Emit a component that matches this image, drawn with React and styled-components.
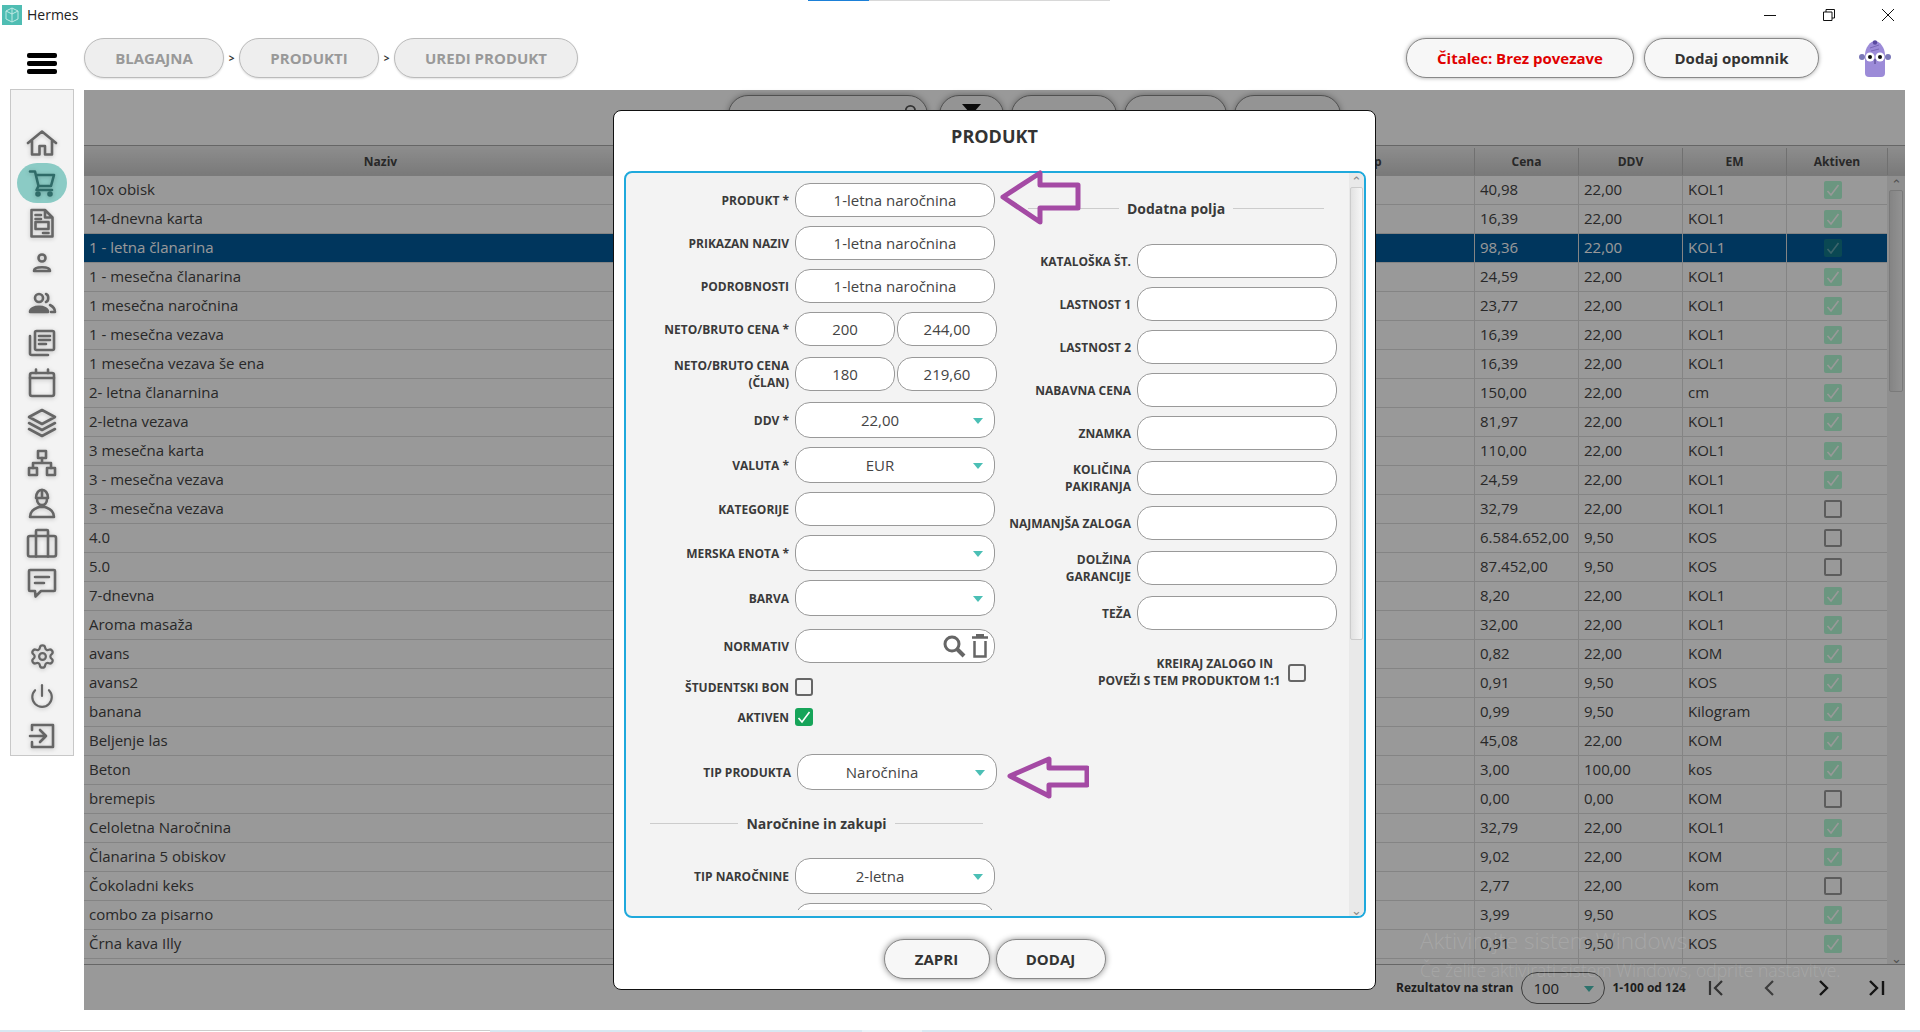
import React from "react";
import styled, { createGlobalStyle } from "styled-components";
import { Settings, Power, Search } from "lucide-react";

const rows = [
  ["10x obisk", "40,98", "22,00", "KOL1", true],
  ["14-dnevna karta", "16,39", "22,00", "KOL1", true],
  ["1 - letna članarina", "98,36", "22,00", "KOL1", true],
  ["1 - mesečna članarina", "24,59", "22,00", "KOL1", true],
  ["1 mesečna naročnina", "23,77", "22,00", "KOL1", true],
  ["1 - mesečna vezava", "16,39", "22,00", "KOL1", true],
  ["1 mesečna vezava še ena", "16,39", "22,00", "KOL1", true],
  ["2- letna članarnina", "150,00", "22,00", "cm", true],
  ["2-letna vezava", "81,97", "22,00", "KOL1", true],
  ["3 mesečna karta", "110,00", "22,00", "KOL1", true],
  ["3 - mesečna vezava", "24,59", "22,00", "KOL1", true],
  ["3 - mesečna vezava", "32,79", "22,00", "KOL1", false],
  ["4.0", "6.584.652,00", "9,50", "KOS", false],
  ["5.0", "87.452,00", "9,50", "KOS", false],
  ["7-dnevna", "8,20", "22,00", "KOL1", true],
  ["Aroma masaža", "32,00", "22,00", "KOL1", true],
  ["avans", "0,82", "22,00", "KOM", true],
  ["avans2", "0,91", "9,50", "KOS", true],
  ["banana", "0,99", "9,50", "Kilogram", true],
  ["Beljenje las", "45,08", "22,00", "KOM", true],
  ["Beton", "3,00", "100,00", "kos", true],
  ["bremepis", "0,00", "0,00", "KOM", false],
  ["Celoletna Naročnina", "32,79", "22,00", "KOL1", true],
  ["Članarina 5 obiskov", "9,02", "22,00", "KOM", true],
  ["Čokoladni keks", "2,77", "22,00", "kom", false],
  ["combo za pisarno", "3,99", "9,50", "KOS", true],
  ["Črna kava Illy", "0,91", "9,50", "KOS", true],
  ["", "", "", "", true],
];

const rightFields = [
  { label: "KATALOŠKA ŠT.", mb: 9 },
  { label: "LASTNOST 1", mb: 9 },
  { label: "LASTNOST 2", mb: 9 },
  { label: "NABAVNA CENA", mb: 9 },
  { label: "ZNAMKA", mb: 11 },
  { label: ["KOLIČINA", "PAKIRANJA"], mb: 11 },
  { label: "NAJMANJŠA ZALOGA", mb: 11 },
  { label: ["DOLŽINA", "GARANCIJE"], mb: 11 },
  { label: "TEŽA", mb: 0 },
];

const Ico = ({ children, stroke = "#666", w = 2.6 }) => (
  <svg width="32" height="32" viewBox="0 0 32 32" fill="none" stroke={stroke} strokeWidth={w} strokeLinejoin="round" strokeLinecap="round">
    {children}
  </svg>
);

const menuIcons = [
  <Ico key="home"><path d="M2 16 16 4.500 30 16M6 13v14.500h7.500v-8.500h5.500v8.500H26V13" /></Ico>,
  <Ico key="cart" stroke="#2f6b68"><path d="M4 4.500h5L12.500 19H25l3-11H10M12.500 19 10.500 23H26" /><circle cx="12" cy="27" r="1.500" /><circle cx="24" cy="27" r="1.500" /></Ico>,
  <Ico key="doc"><path d="M5.500 3h13.500l7.500 7.500V29.500H5.500zM19 3v7.500h7.500M9.500 8H15M9.500 12H15M17 26h5.500" /><rect x="9.500" y="15" width="13" height="7" /></Ico>,
  <Ico key="person"><circle cx="16" cy="11" r="3.500" /><path d="M8 24c0-5 16-5 16 0z" /></Ico>,
  <Ico key="users"><circle cx="13" cy="11" r="4" /><path d="M4 25c0-7 18-7 18 0z" fill="#666" /><path d="M20 7c3 1 3 7 0 8M24 18c3 1.500 5 4 5 7h-4" /></Ico>,
  <Ico key="copies"><rect x="9" y="4" width="19" height="19" rx="1.500" /><path d="M4 9v17.500Q4 28 6 28h16M13 9h11M13 13h11M13 17h7" /></Ico>,
  <Ico key="calendar"><rect x="4" y="6" width="24" height="23" rx="2" /><path d="M4 11h24M10 2.500V6M22 2.500V6" /></Ico>,
  <Ico key="layers"><path d="M16 3 29 10 16 17 3 10zM3 16l13 7 13-7M3 22l13 7 13-7" /></Ico>,
  <Ico key="network"><rect x="12" y="4" width="8" height="7" /><rect x="3" y="21" width="8" height="7" /><rect x="21" y="21" width="8" height="7" /><path d="M16 11v5M7 21v-5h18v5" /></Ico>,
  <Ico key="worker"><path d="M10 11c0-11 12-11 12 0zM16 3v8M11 12c0 8 10 8 10 0M4 30c0-8 7-9 9-10h6c2 1 9 2 9 10z" /></Ico>,
  <Ico key="case"><rect x="2" y="9" width="28" height="20.500" rx="2" /><path d="M10 9V4q0-1 1-1h10q1 0 1 1v5M10 9v20.500M22 9v20.500" /></Ico>,
  <Ico key="chat"><path d="M4 3h24q1 0 1 1v19q0 1-1 1H15l-5.500 5.500L9 24H4q-1 0-1-1V4q0-1 1-1zM9 10h14M9 16h9" /></Ico>,
];

const bottomIcons = [
  <Settings key="gear" size={27} color="#666" strokeWidth={2} />,
  <Power key="power" size={26} color="#666" strokeWidth={2} />,
  <Ico key="exit"><path d="M6 10V5h21v22H6v-5M4 16h16M14 10l6 6-6 6" /></Ico>,
];

const Arrow = ({ points, left, top, width, height }) => (
  <ArrowSvg $left={left} $top={top} width={width} height={height} viewBox={`0 0 ${width} ${height}`}>
    <polygon points={points} fill="none" stroke="#a44aa4" strokeWidth="5" strokeLinejoin="round" />
  </ArrowSvg>
);

const Mascot = () => (
  <svg width="32" height="38" viewBox="0 0 32 38">
    <path d="M6 15c0-7 5-14 10-14s10 7 10 14v18q0 4-4 4H10q-4 0-4-4z" fill="#9c8bd8" />
    <path d="M11 8l9-3M12 11l8-2" stroke="#7a68b8" strokeWidth="1" fill="none" />
    <circle cx="16" cy="2.500" r="2.200" fill="#5a4aa0" />
    <circle cx="3" cy="17" r="3" fill="#7b78b8" />
    <circle cx="29" cy="17" r="3" fill="#7b78b8" />
    <circle cx="11" cy="17" r="4.500" fill="#fff" />
    <circle cx="21" cy="17" r="4.500" fill="#fff" />
    <circle cx="11" cy="17" r="2" fill="#111" />
    <circle cx="21" cy="17" r="2" fill="#111" />
    <path d="M16 19v5" stroke="#4a3d80" strokeWidth="1" />
  </svg>
);

const Check = ({ dim }) => (
  <svg width="14" height="14" viewBox="0 0 14 14" fill="none" stroke="#fff" strokeWidth="1.600" opacity={dim ? 0.35 : 1}>
    <path d="M1.500 8 5 12 12.500 2" />
  </svg>
);

export default function App() {
  return (
    <>
      <GlobalStyle />
      <Page>
        <TopLine>
          <TopBlue />
          <TopGrey />
        </TopLine>

        <TitleBar>
          <AppLogo>
            <svg width="14" height="16" viewBox="0 0 14 16" fill="none" stroke="#bfe9e4" strokeWidth="1">
              <path d="M7 1 13 4v8l-6 3-6-3V4zM7 1v14M1 4l6 3 6-3" />
            </svg>
          </AppLogo>
          <AppName>Hermes</AppName>
          <WindowControls>
            <svg width="12" height="12" viewBox="0 0 12 12" stroke="#111" fill="none"><path d="M0 6.500h12" /></svg>
            <svg width="12" height="12" viewBox="0 0 12 12" stroke="#111" fill="none"><path d="M.5 3h8.500v8.500H.5zM3 3V.5h8.500V9H9" /></svg>
            <svg width="12" height="12" viewBox="0 0 12 12" stroke="#111" fill="none"><path d="M0 0l12 12M12 0 0 12" /></svg>
          </WindowControls>
        </TitleBar>

        <Toolbar>
          <Burger>
            <span />
            <span />
            <span />
          </Burger>
          <Crumbs>
            <Crumb $w={140}>BLAGAJNA</Crumb>
            <CrumbSep>&gt;</CrumbSep>
            <Crumb $w={140}>PRODUKTI</Crumb>
            <CrumbSep>&gt;</CrumbSep>
            <Crumb $w={184}>UREDI PRODUKT</Crumb>
          </Crumbs>
          <ToolbarRight>
            <TopButton $w={228} $color="#e00000">Čitalec: Brez povezave</TopButton>
            <TopButton $w={175} $color="#333">Dodaj opomnik</TopButton>
            <MascotBox>
              <Mascot />
            </MascotBox>
          </ToolbarRight>
        </Toolbar>

        <Body>
          <Sidebar>
            {menuIcons.map((icon, i) => (
              <MenuItem key={i} $active={i === 1}>{icon}</MenuItem>
            ))}
            <MenuGap />
            {bottomIcons.map((icon, i) => (
              <MenuItem key={i}>{icon}</MenuItem>
            ))}
          </Sidebar>

          <Main>
            <FilterBar>
              <FilterPill $w={200}>
                <Search size={14} color="#555" strokeWidth={3} />
              </FilterPill>
              <FilterPill $w={65} $ml={4} $center>
                <svg width="19" height="14" viewBox="0 0 19 14" fill="#111"><path d="M0 0h19l-7 8v6H7V8z" /></svg>
              </FilterPill>
              <FilterPill $w={106} />
              <FilterPill $w={103} />
              <FilterPill $w={107} />
            </FilterBar>

            <TableHead>
              <HeadCell>Naziv</HeadCell>
              <HeadCell />
              <HeadCell>Tip</HeadCell>
              <HeadCell>Cena</HeadCell>
              <HeadCell>DDV</HeadCell>
              <HeadCell>EM</HeadCell>
              <HeadCell>Aktiven</HeadCell>
              <HeadCell />
            </TableHead>

            <TableBody>
              <RowList>
                {rows.map((r, i) => (
                  <Row key={i} $selected={i === 2}>
                    <Cell>{r[0]}</Cell>
                    <Cell />
                    <Cell />
                    <Cell $line>{r[1]}</Cell>
                    <Cell $line>{r[2]}</Cell>
                    <Cell $line>{r[3]}</Cell>
                    <Cell $line>
                      <TableCheck $on={r[4]} $selected={i === 2}>{r[4] && <Check dim={i === 2} />}</TableCheck>
                    </Cell>
                  </Row>
                ))}
              </RowList>
              <TableScroll>
                <ScrollArrow>⌃</ScrollArrow>
                <TableThumb />
                <ScrollArrow $down>⌄</ScrollArrow>
              </TableScroll>
            </TableBody>

            <Pager>
              <PagerLabel>Rezultatov na stran</PagerLabel>
              <PageSize>
                100
                <Caret />
              </PageSize>
              <PagerLabel>1-100 od 124</PagerLabel>
              <PagerNav>
                <svg width="20" height="20" viewBox="0 0 20 20" fill="none" stroke="#555" strokeWidth="2.200"><path d="M3 3v14M15 3 8 10l7 7" /></svg>
                <svg width="20" height="20" viewBox="0 0 20 20" fill="none" stroke="#666" strokeWidth="2.200"><path d="M13 3 6 10l7 7" /></svg>
                <svg width="20" height="20" viewBox="0 0 20 20" fill="none" stroke="#222" strokeWidth="2.400"><path d="m7 3 7 7-7 7" /></svg>
                <svg width="20" height="20" viewBox="0 0 20 20" fill="none" stroke="#222" strokeWidth="2.400"><path d="m4 3 7 7-7 7M17 3v14" /></svg>
              </PagerNav>
            </Pager>

            <Dim />
          </Main>
        </Body>

        <Taskbar>
          <TaskSeg $w={60} />
          <TaskSeg $w={430} $open />
          <TaskSeg $w={372} />
          <TaskSeg $w={60} $light />
          <TaskSeg $grow />
        </Taskbar>

        <Modal>
          <ModalTitle>PRODUKT</ModalTitle>
          <Panel>
            <PanelScroll>
              <LeftColumn>
                <Field $mb={9}><Label>PRODUKT *</Label><Input>1-letna naročnina</Input></Field>
                <Field $mb={9}><Label>PRIKAZAN NAZIV</Label><Input>1-letna naročnina</Input></Field>
                <Field $mb={9}><Label>PODROBNOSTI</Label><Input>1-letna naročnina</Input></Field>
                <Field $mb={11}>
                  <Label>NETO/BRUTO CENA *</Label>
                  <Input $w={100}>200</Input>
                  <Input $w={100} $ml={2}>244,00</Input>
                </Field>
                <Field $mb={11}>
                  <Label>NETO/BRUTO CENA<br />(ČLAN)</Label>
                  <Input $w={100}>180</Input>
                  <Input $w={100} $ml={2}>219,60</Input>
                </Field>
                <Field $mb={9} $h={36}><Label>DDV *</Label><Select>22,00<Caret $abs /></Select></Field>
                <Field $mb={9} $h={36}><Label>VALUTA *</Label><Select>EUR<Caret $abs /></Select></Field>
                <Field $mb={9}><Label>KATEGORIJE</Label><Input /></Field>
                <Field $mb={9} $h={36}><Label>MERSKA ENOTA *</Label><Select><Caret $abs /></Select></Field>
                <Field $mb={13} $h={36}><Label>BARVA</Label><Select><Caret $abs /></Select></Field>
                <Field $mb={15}>
                  <Label>NORMATIV</Label>
                  <Input>
                    <InputIcons>
                      <svg width="24" height="24" viewBox="0 0 24 24" fill="none" stroke="#666" strokeWidth="3">
                        <circle cx="10" cy="10" r="7" />
                        <path d="m15 15 7 7" strokeWidth="4" />
                      </svg>
                      <svg width="18" height="24" viewBox="0 0 18 24" fill="none" stroke="#666" strokeWidth="2.500">
                        <path d="M1 3.500h16M5 1h8M3.500 7v15.500h11V7" />
                      </svg>
                    </InputIcons>
                  </Input>
                </Field>
                <Field $mb={12} $h={18}><Label>ŠTUDENTSKI BON</Label><CheckBox /></Field>
                <Field $mb={28} $h={18}><Label>AKTIVEN</Label><CheckBox $on><Check /></CheckBox></Field>
                <Field $h={36} $shift={2}><Label>TIP PRODUKTA</Label><Select>Naročnina<Caret $abs /></Select></Field>
                <Section $left={24} $width={333} $mt={23} $mb={25}>Naročnine in zakupi</Section>
                <Field $mb={9} $h={36}><Label>TIP NAROČNINE</Label><Select>2-letna<Caret $abs /></Select></Field>
                <Field $h={36}><Label /><Input $h={36} /></Field>
              </LeftColumn>

              <RightColumn>
                <Section $left={22} $width={296} $mt={25} $mb={26}>Dodatna polja</Section>
                {rightFields.map((f) => (
                  <Field key={f.label} $mb={f.mb} $labelWidth={125}>
                    {Array.isArray(f.label) ? (
                      <Label>{f.label[0]}<br />{f.label[1]}</Label>
                    ) : (
                      <Label>{f.label}</Label>
                    )}
                    <Input />
                  </Field>
                ))}
                <StockRow>
                  <StockLabel>KREIRAJ ZALOGO IN<br />POVEŽI S TEM PRODUKTOM 1:1</StockLabel>
                  <CheckBox />
                </StockRow>
              </RightColumn>
            </PanelScroll>

            <PanelScrollbar>
              <ScrollArrow>⌃</ScrollArrow>
              <PanelThumb />
              <ScrollArrow $down>⌄</ScrollArrow>
            </PanelScrollbar>
          </Panel>

          <ModalButtons>
            <ModalButton $w={106}>ZAPRI</ModalButton>
            <ModalButton $w={110}>DODAJ</ModalButton>
          </ModalButtons>

          <Arrow left={386} top={58} width={82} height={58} points="3,28 40,4 40,16 78,16 78,39 40,39 40,53" />
          <Arrow left={393} top={645} width={82} height={44} points="3,20 42,3 42,12 80,12 80,29 42,29 42,40" />
        </Modal>

        <Watermark>
          <WatermarkTitle>Aktivirajte sistem Windows</WatermarkTitle>
          <WatermarkText>Če želite aktivirati sistem Windows, odprite nastavitve.</WatermarkText>
        </Watermark>
      </Page>
    </>
  );
}

const GlobalStyle = createGlobalStyle`
  html, body {
    margin: 0;
    padding: 0;
    background: #fff;
    overflow: hidden;
  }
  * {
    box-sizing: border-box;
  }
  body {
    font-family: "Open Sans", "Noto Sans", sans-serif;
    color: #333;
  }
`;

const Page = styled.div`
  position: relative;
  width: 1920px;
  height: 1032px;
  display: flex;
  flex-direction: column;
  overflow: hidden;
`;

const TopLine = styled.div`
  display: flex;
  height: 1px;
  padding-left: 808px;
`;

const TopBlue = styled.div`
  width: 61px;
  background: #1b80d8;
`;

const TopGrey = styled.div`
  width: 241px;
  background: #d8d8d8;
`;

const TitleBar = styled.div`
  height: 29px;
  display: flex;
  align-items: center;
  padding: 0 26px 1px 2px;
`;

const AppLogo = styled.div`
  width: 20px;
  height: 20px;
  background: #4fbdb3;
  display: flex;
  align-items: center;
  justify-content: center;
`;

const AppName = styled.div`
  margin-left: 5px;
  margin-bottom: 2px;
  font-size: 14px;
  color: #222;
`;

const WindowControls = styled.div`
  margin-left: auto;
  display: flex;
  gap: 47px;
`;

const Toolbar = styled.div`
  height: 60px;
  padding: 8px 29px 0 27px;
  display: flex;
  align-items: flex-start;
`;

const Burger = styled.div`
  width: 30px;
  margin-top: 15px;
  margin-right: 27px;
  display: flex;
  flex-direction: column;
  gap: 3px;

  span {
    display: block;
    height: 5px;
    background: #000;
    border-radius: 2px;
  }
`;

const Crumbs = styled.div`
  display: flex;
  align-items: center;
`;

const Crumb = styled.div`
  width: ${(p) => p.$w}px;
  height: 40px;
  border-radius: 20px;
  border: 1px solid #bbb;
  background: #eee;
  color: #999;
  font-size: 15px;
  font-weight: 700;
  display: flex;
  align-items: center;
  justify-content: center;
  box-shadow: 0 1px 2px rgba(0, 0, 0, 0.12);
`;

const CrumbSep = styled.div`
  width: 15px;
  text-align: center;
  font-size: 10px;
  font-weight: 700;
  color: #333;
`;

const ToolbarRight = styled.div`
  margin-left: auto;
  display: flex;
  align-items: flex-start;
  gap: 10px;
`;

const TopButton = styled.div`
  width: ${(p) => p.$w}px;
  height: 40px;
  border-radius: 20px;
  border: 1px solid #888;
  background: #f7f7f7;
  color: ${(p) => p.$color};
  font-size: 15px;
  font-weight: 700;
  display: flex;
  align-items: center;
  justify-content: center;
  box-shadow: 0 0 4px rgba(0, 0, 0, 0.35);
`;

const MascotBox = styled.div`
  width: 32px;
  margin-left: 30px;
  margin-top: 2px;
`;

const Body = styled.div`
  flex: 1;
  display: flex;
  align-items: flex-start;
  padding-left: 10px;
  gap: 10px;
`;

const Sidebar = styled.div`
  width: 64px;
  height: 667px;
  margin-top: -1px;
  padding-top: 33px;
  background: #f3f3f3;
  border: 1px solid #c8c8c8;
  display: flex;
  flex-direction: column;
  align-items: center;
`;

const MenuItem = styled.div`
  width: 50px;
  height: 40px;
  flex: none;
  display: flex;
  align-items: center;
  justify-content: center;
  border-radius: 20px;
  background: ${(p) => (p.$active ? "#8bcbc5" : "transparent")};

  svg {
    filter: drop-shadow(0 1px 2px rgba(0, 0, 0, 0.2));
  }
`;

const MenuGap = styled.div`
  height: 33px;
  flex: none;
`;

const Main = styled.div`
  position: relative;
  width: 1821px;
  height: 920px;
  background: #fff;
  display: flex;
  flex-direction: column;
`;

const FilterBar = styled.div`
  height: 55px;
  padding: 5px 0 0 644px;
  display: flex;
  gap: 7px;
`;

const FilterPill = styled.div`
  width: ${(p) => p.$w}px;
  height: 40px;
  margin-left: ${(p) => p.$ml || 0}px;
  border: 1px solid #888;
  border-radius: 20px;
  background: #f7f7f7;
  box-shadow: 0 0 6px rgba(0, 0, 0, 0.35);
  display: flex;
  justify-content: ${(p) => (p.$center ? "center" : "flex-end")};
  padding: ${(p) => (p.$center ? "8px 0 0" : "8px 9px 0 0")};
`;

const TableHead = styled.div`
  height: 31px;
  padding-top: 2px;
  display: grid;
  grid-template-columns: 593px 593px 204px 104px 104px 104px 101px 18px;
  background: linear-gradient(#ececec, #cbcbcb);
  border-top: 1px solid #aaa;
  border-bottom: 1px solid #ccc;
`;

const HeadCell = styled.div`
  font-size: 12px;
  font-weight: 700;
  color: #444;
  display: flex;
  align-items: center;
  justify-content: center;
  border-left: 1px solid #bbb;

  &:first-child {
    border-left: 0;
  }
`;

const TableBody = styled.div`
  height: 789px;
  display: flex;
  overflow: hidden;
  border-bottom: 1px solid #aaa;
`;

const RowList = styled.div`
  flex: 1;
`;

const Row = styled.div`
  height: 29px;
  display: grid;
  grid-template-columns: 593px 593px 204px 104px 104px 104px 101px;
  background: ${(p) => (p.$selected ? "#005a9c" : "#fff")};
  color: ${(p) => (p.$selected ? "#fff" : "#444")};
  border-bottom: 1px solid #ddd;
`;

const Cell = styled.div`
  display: flex;
  align-items: center;
  padding: 0 0 2px 5px;
  font-size: 15px;
  white-space: nowrap;
  border-left: ${(p) => (p.$line ? "1px solid #ddd" : "0")};
`;

const TableCheck = styled.div`
  width: 18px;
  height: 18px;
  margin-left: 32px;
  margin-top: 2px;
  border-radius: 2px;
  display: flex;
  align-items: center;
  justify-content: center;
  background: ${(p) => (!p.$on ? "transparent" : p.$selected ? "#11788a" : "#b2fad5")};
  border: ${(p) => (p.$on ? "0" : "2px solid #999")};
`;

const TableScroll = styled.div`
  width: 18px;
  background: #eee;
  display: flex;
  flex-direction: column;
  align-items: center;
`;

const TableThumb = styled.div`
  width: 14px;
  height: 202px;
  background: linear-gradient(90deg, #ddd, #f4f4f4);
  border: 1px solid #ccc;
  border-radius: 2px;
`;

const ScrollArrow = styled.div`
  height: 14px;
  width: 100%;
  flex: none;
  color: #888;
  font-size: 13px;
  line-height: 16px;
  text-align: center;
  margin-top: ${(p) => (p.$down ? "auto" : "0")};
`;

const Pager = styled.div`
  height: 45px;
  padding-left: 1312px;
  display: flex;
  align-items: center;
`;

const PagerLabel = styled.div`
  font-size: 12px;
  font-weight: 700;
  color: #333;
  white-space: nowrap;
`;

const PageSize = styled.div`
  position: relative;
  width: 84px;
  height: 32px;
  margin: 0 7px 0 8px;
  padding-left: 11px;
  border: 1px solid #666;
  border-radius: 16px;
  font-size: 15px;
  display: flex;
  align-items: center;
  color: #333;

  > div {
    position: absolute;
    right: 10px;
    top: 13px;
  }
`;

const PagerNav = styled.div`
  display: flex;
  gap: 33px;
  margin-left: 21px;
`;

const Dim = styled.div`
  position: absolute;
  inset: 0;
  background: rgba(0, 0, 0, 0.4);
`;

const Taskbar = styled.div`
  height: 2px;
  display: flex;
`;

const TaskSeg = styled.div`
  width: ${(p) => (p.$w ? `${p.$w}px` : "auto")};
  flex: ${(p) => (p.$grow ? 1 : "none")};
  background: ${(p) => (p.$open ? "#fff" : p.$light ? "#eaf3f8" : "#d8e8f2")};
  border-top: ${(p) => (p.$open ? "1px solid #ccc" : "0")};
`;

const Modal = styled.div`
  position: absolute;
  left: 613px;
  top: 110px;
  width: 763px;
  height: 880px;
  background: #fff;
  border: 1px solid #111;
  border-radius: 8px;
  display: flex;
  flex-direction: column;
`;

const ModalTitle = styled.div`
  height: 60px;
  padding-bottom: 10px;
  flex: none;
  display: flex;
  align-items: center;
  justify-content: center;
  font-size: 18px;
  font-weight: 700;
  color: #333;
`;

const Panel = styled.div`
  margin-left: 10px;
  width: 742px;
  height: 747px;
  flex: none;
  background: #f3f3f3;
  border: 2px solid #1fa9dc;
  border-radius: 8px;
  display: flex;
  overflow: hidden;
`;

const PanelScroll = styled.div`
  height: 737px;
  flex: 1;
  display: flex;
  align-items: flex-start;
  overflow: hidden;
`;

const LeftColumn = styled.div`
  width: 380px;
  flex: none;
  padding-top: 10px;
`;

const RightColumn = styled.div`
  width: 339px;
  flex: none;
`;

const Field = styled.div`
  height: ${(p) => p.$h || 34}px;
  margin-bottom: ${(p) => p.$mb || 0}px;
  padding-left: ${(p) => p.$shift || 0}px;
  display: flex;
  align-items: center;

  > :first-child {
    width: ${(p) => p.$labelWidth || 163}px;
  }
`;

const Label = styled.div`
  flex: none;
  margin-right: 6px;
  text-align: right;
  font-size: 12px;
  font-weight: 700;
  line-height: 17px;
  color: #3a3a3a;
  white-space: nowrap;
`;

const Input = styled.div`
  position: relative;
  width: ${(p) => p.$w || 200}px;
  height: ${(p) => p.$h || 34}px;
  margin-left: ${(p) => p.$ml || 0}px;
  flex: none;
  background: #fff;
  border: 1px solid #999;
  border-radius: 15px;
  display: flex;
  align-items: center;
  justify-content: center;
  font-size: 15px;
  color: #444;
`;

const Select = styled(Input)`
  height: 36px;
  padding-right: 30px;
`;

const Caret = styled.div`
  width: 0;
  height: 0;
  border-left: 5px solid transparent;
  border-right: 5px solid transparent;
  border-top: 6px solid #4bbfb5;
  ${(p) => (p.$abs ? "position: absolute; right: 11px; top: 15px;" : "")}
`;

const InputIcons = styled.div`
  position: absolute;
  right: 5px;
  top: 4px;
  display: flex;
  gap: 5px;
`;

const CheckBox = styled.div`
  width: 18px;
  height: 18px;
  flex: none;
  border-radius: 3px;
  display: flex;
  align-items: center;
  justify-content: center;
  background: ${(p) => (p.$on ? "#16a459" : "transparent")};
  border: ${(p) => (p.$on ? "0" : "2px solid #666")};
`;

const Section = styled.div`
  width: ${(p) => p.$width}px;
  height: 20px;
  margin: ${(p) => p.$mt}px 0 ${(p) => p.$mb}px ${(p) => p.$left}px;
  display: flex;
  align-items: center;
  gap: 8px;
  font-size: 14px;
  font-weight: 700;
  color: #3a3a3a;
  white-space: nowrap;

  &::before,
  &::after {
    content: "";
    flex: 1;
    height: 1px;
    background: #ccc;
  }
`;

const StockRow = styled.div`
  margin-top: 27px;
  display: flex;
  align-items: center;
  padding-left: 92px;
  gap: 15px;
`;

const StockLabel = styled.div`
  width: 175px;
  flex: none;
  margin-top: -2px;
  text-align: right;
  white-space: nowrap;
  font-size: 12px;
  font-weight: 700;
  line-height: 17px;
  color: #3a3a3a;
`;

const PanelScrollbar = styled.div`
  width: 15px;
  flex: none;
  background: #e9e9e9;
  display: flex;
  flex-direction: column;
  align-items: center;
`;

const PanelThumb = styled.div`
  width: 13px;
  height: 453px;
  background: linear-gradient(90deg, #e2e2e2, #f7f7f7);
  border: 1px solid #ccc;
  border-radius: 2px;
`;

const ModalButtons = styled.div`
  margin-top: 21px;
  display: flex;
  justify-content: center;
  gap: 6px;
`;

const ModalButton = styled.div`
  width: ${(p) => p.$w}px;
  height: 40px;
  border: 1px solid #888;
  border-radius: 20px;
  background: #f7f7f7;
  box-shadow: 0 0 6px rgba(0, 0, 0, 0.45);
  font-size: 15px;
  font-weight: 700;
  color: #333;
  display: flex;
  align-items: center;
  justify-content: center;
`;

const ArrowSvg = styled.svg`
  position: absolute;
  left: ${(p) => p.$left}px;
  top: ${(p) => p.$top}px;
`;

const Watermark = styled.div`
  position: absolute;
  left: 1420px;
  top: 923px;
  color: rgba(255, 255, 255, 0.14);
  pointer-events: none;
`;

const WatermarkTitle = styled.div`
  font-size: 22.500px;
  font-weight: 300;
  line-height: 36px;
  white-space: nowrap;
`;

const WatermarkText = styled.div`
  font-size: 17.500px;
  font-weight: 300;
  line-height: 24px;
  margin-top: -1px;
  white-space: nowrap;
`;
